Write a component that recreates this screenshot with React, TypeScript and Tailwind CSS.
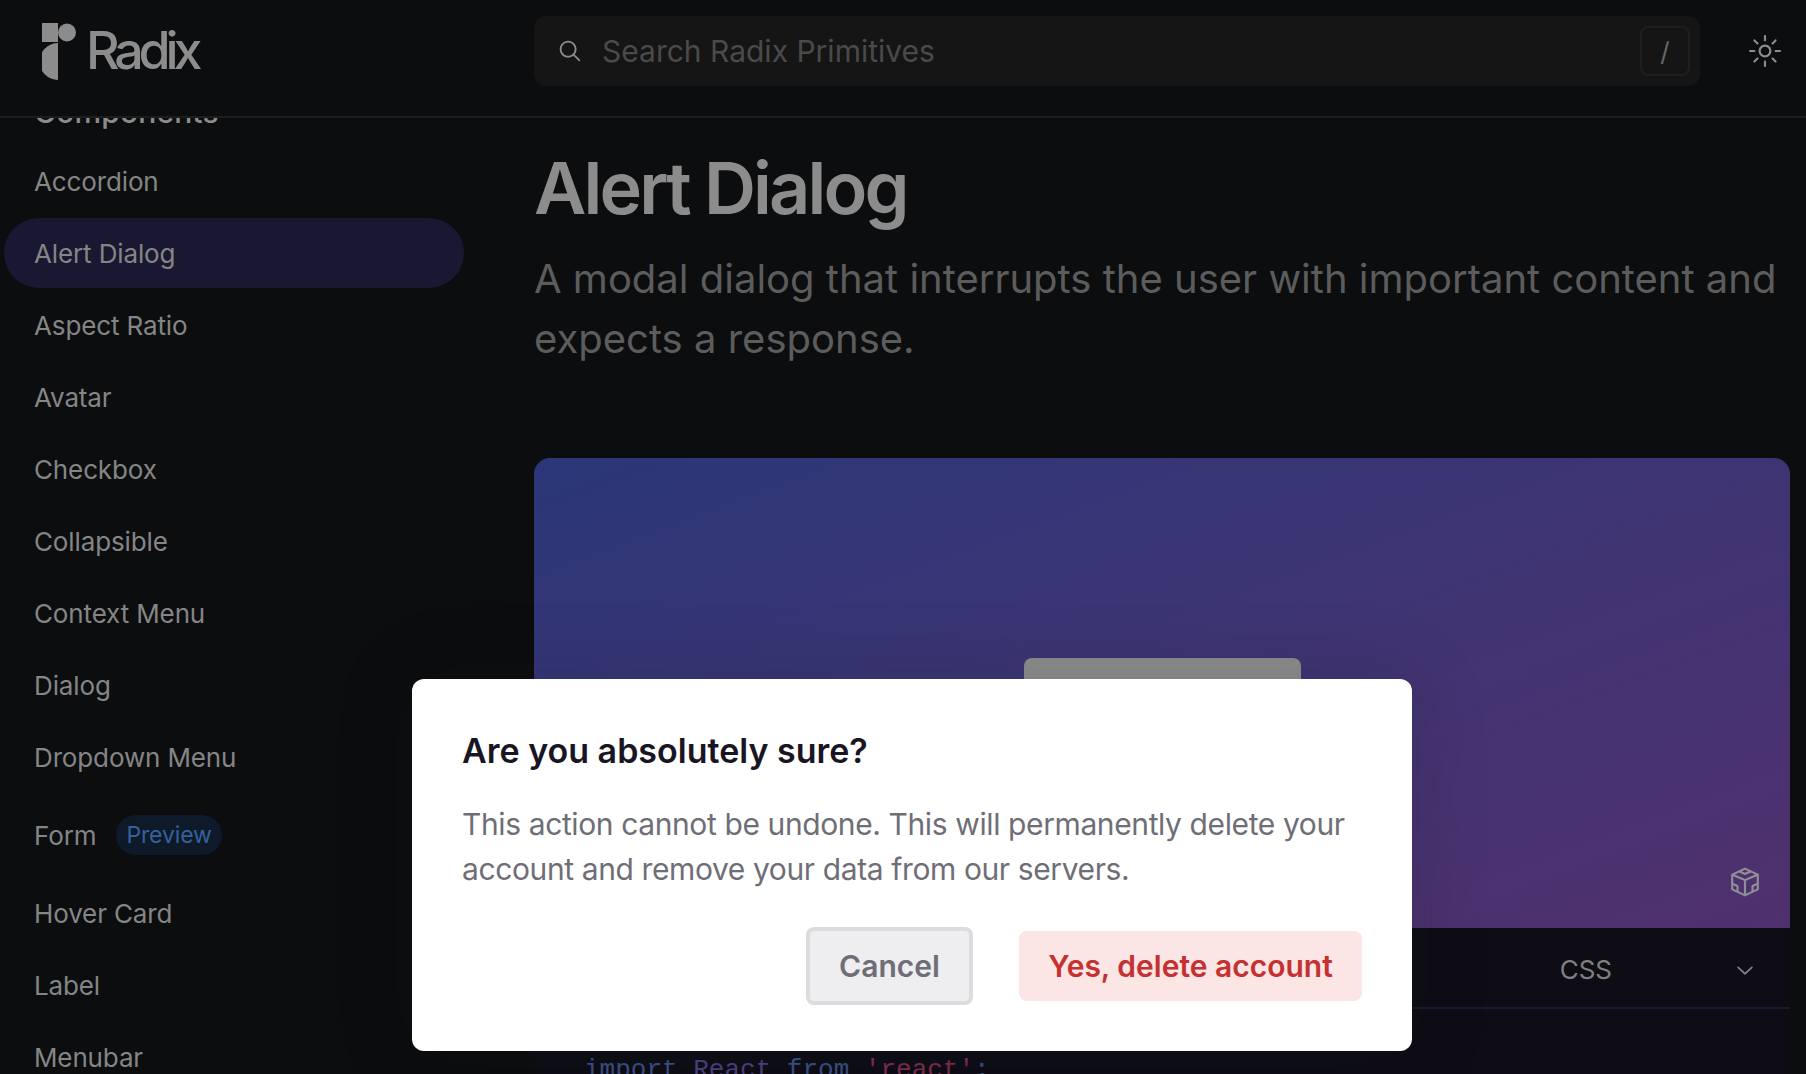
import { RxMagnifyingGlass, RxSun, RxCodesandboxLogo, RxChevronDown } from 'react-icons/rx'

const items = [
  'Accordion',
  'Alert Dialog',
  'Aspect Ratio',
  'Avatar',
  'Checkbox',
  'Collapsible',
  'Context Menu',
  'Dialog',
  'Dropdown Menu',
  'Form',
  'Hover Card',
  'Label',
  'Menubar',
]

function Logo() {
  return (
    <div className="flex items-center gap-[10px]">
      <svg width="34" height="57" viewBox="0 0 34 57" className="text-[#8c8c8c]" fill="currentColor">
        <rect x="0" y="0" width="16" height="19" />
        <circle cx="25" cy="9.5" r="9" />
        <path d="M16 20 A18.5 18.5 0 0 0 16 57 Z" />
      </svg>
      <span className="text-[52px] leading-none font-medium tracking-[-0.1em] text-[#8c8c8c]">Radix</span>
    </div>
  )
}

function Header() {
  return (
    <header className="h-[118px] shrink-0 flex items-center pb-[14px] bg-[#0c0d0f] border-b-2 border-[#1c1d1e] relative z-10">
      <div className="w-[534px] shrink-0 pl-[42px] flex items-center">
        <Logo />
      </div>
      <div className="w-[1166px] h-[70px] rounded-xl bg-[#151515] flex items-center pl-[22px] pr-[10px]">
        <RxMagnifyingGlass className="w-[28px] h-[28px] text-[#8c8c8c]" />
        <span className="ml-[18px] flex-1 text-[30px] text-[#4a4a4a]">Search Radix Primitives</span>
        <div className="w-[50px] h-[50px] rounded-lg border-2 border-[#1f1f1f] flex items-center justify-center text-[26px] text-[#666666]">
          /
        </div>
      </div>
      <RxSun className="ml-[49px] w-[32px] h-[32px] text-[#8c8c8c]" />
    </header>
  )
}

function Sidebar() {
  return (
    <aside className="w-[534px] shrink-0 overflow-hidden">
      <div className="pl-[4px] w-[464px] -mt-[24px]">
        <div className="pl-[30px] h-[36px] text-[30px] leading-[36px] font-medium tracking-[0.005em] text-[#8c8c8c]">
          Components
        </div>
        <div className="mt-[16px] flex flex-col">
          {items.map((item) => (
            <div
              key={item}
              className={
                'h-[70px] shrink-0 mb-[2px] pl-[30px] flex items-center rounded-full text-[26px] tracking-[-0.005em] text-[#858585] ' +
                (item === 'Alert Dialog' ? 'bg-[#1a1732] ' : '') +
                (item === 'Form' ? 'h-[82px] ' : '')
              }
            >
              {item}
              {item === 'Form' && (
                <span className="ml-[20px] px-[10px] h-[40px] flex items-center rounded-full bg-[#0e1a29] text-[23px] text-[#36619c]">
                  Preview
                </span>
              )}
            </div>
          ))}
        </div>
      </div>
    </aside>
  )
}

function Main() {
  return (
    <main className="flex-1 min-w-0 pr-[16px]">
      <h1 className="mt-[30px] text-[72px] leading-[80px] font-semibold tracking-[-0.04em] text-[#8c8c8c]">Alert Dialog</h1>
      <p className="mt-[21px] text-[40px] leading-[60px] text-[#5c5c5c] whitespace-nowrap">
        A modal dialog that interrupts the user with important content and
        <br />
        expects a response.
      </p>
      <div className="mt-[89px] h-[470px] rounded-t-2xl bg-gradient-to-br from-[#2a3778] to-[#50306e] relative flex justify-center pt-[200px]">
        <div className="w-[277px] h-[70px] rounded-lg bg-[#8c8c8c]" />
        <RxCodesandboxLogo className="absolute right-[29px] bottom-[30px] w-[32px] h-[32px] text-[#8f8f98]" />
      </div>
      <div className="h-[81px] pt-[3px] bg-[#0e0d15] border-b-2 border-[#1c1832] flex items-center justify-end pr-[32px]">
        <span className="text-[26px] text-[#7f7f7f]">CSS</span>
        <RxChevronDown className="ml-[120px] w-[26px] h-[26px] text-[#7f7f7f]" />
      </div>
      <div className="h-[200px] bg-[#0e0d15] pl-[50px] pt-[46px] text-[26px] leading-[30px] font-['Liberation_Mono',monospace] text-[#3a4f85] whitespace-nowrap overflow-hidden">
        import <span className="text-[#4c3f7f]">React</span> from <span className="text-[#7d2c4f]">'react'</span>;
      </div>
    </main>
  )
}

function AlertDialog() {
  return (
    <div className="absolute left-[412px] top-[679px] w-[1000px] h-[372px] bg-white rounded-xl px-[50px] pt-[50px] shadow-[0_0_80px_rgba(14,18,22,0.15)]">
      <h2 className="text-[34px] leading-[44px] font-semibold text-[#1a1523]">Are you absolutely sure?</h2>
      <p className="mt-[29px] text-[30px] leading-[45px] tracking-[-0.013em] text-[#6f6e77] whitespace-nowrap">
        This action cannot be undone. This will permanently delete your
        <br />
        account and remove your data from our servers.
      </p>
      <div className="mt-[35px] flex justify-end items-center gap-[46px]">
        <button className="w-[167px] h-[78px] rounded-lg bg-[#eeedef] border-4 border-[#dcdbdd] text-[30px] font-semibold text-[#6f6e77]">
          Cancel
        </button>
        <button className="w-[343px] h-[70px] rounded-lg bg-[#fbe5e5] text-[30px] font-semibold text-[#c53030]">
          Yes, delete account
        </button>
      </div>
    </div>
  )
}

export default function App() {
  return (
    <div className="relative h-[1074px] overflow-hidden flex flex-col bg-[#0c0d0f] font-['Inter',sans-serif]">
      <Header />
      <div className="flex flex-1 min-h-0">
        <Sidebar />
        <Main />
      </div>
      <AlertDialog />
    </div>
  )
}
